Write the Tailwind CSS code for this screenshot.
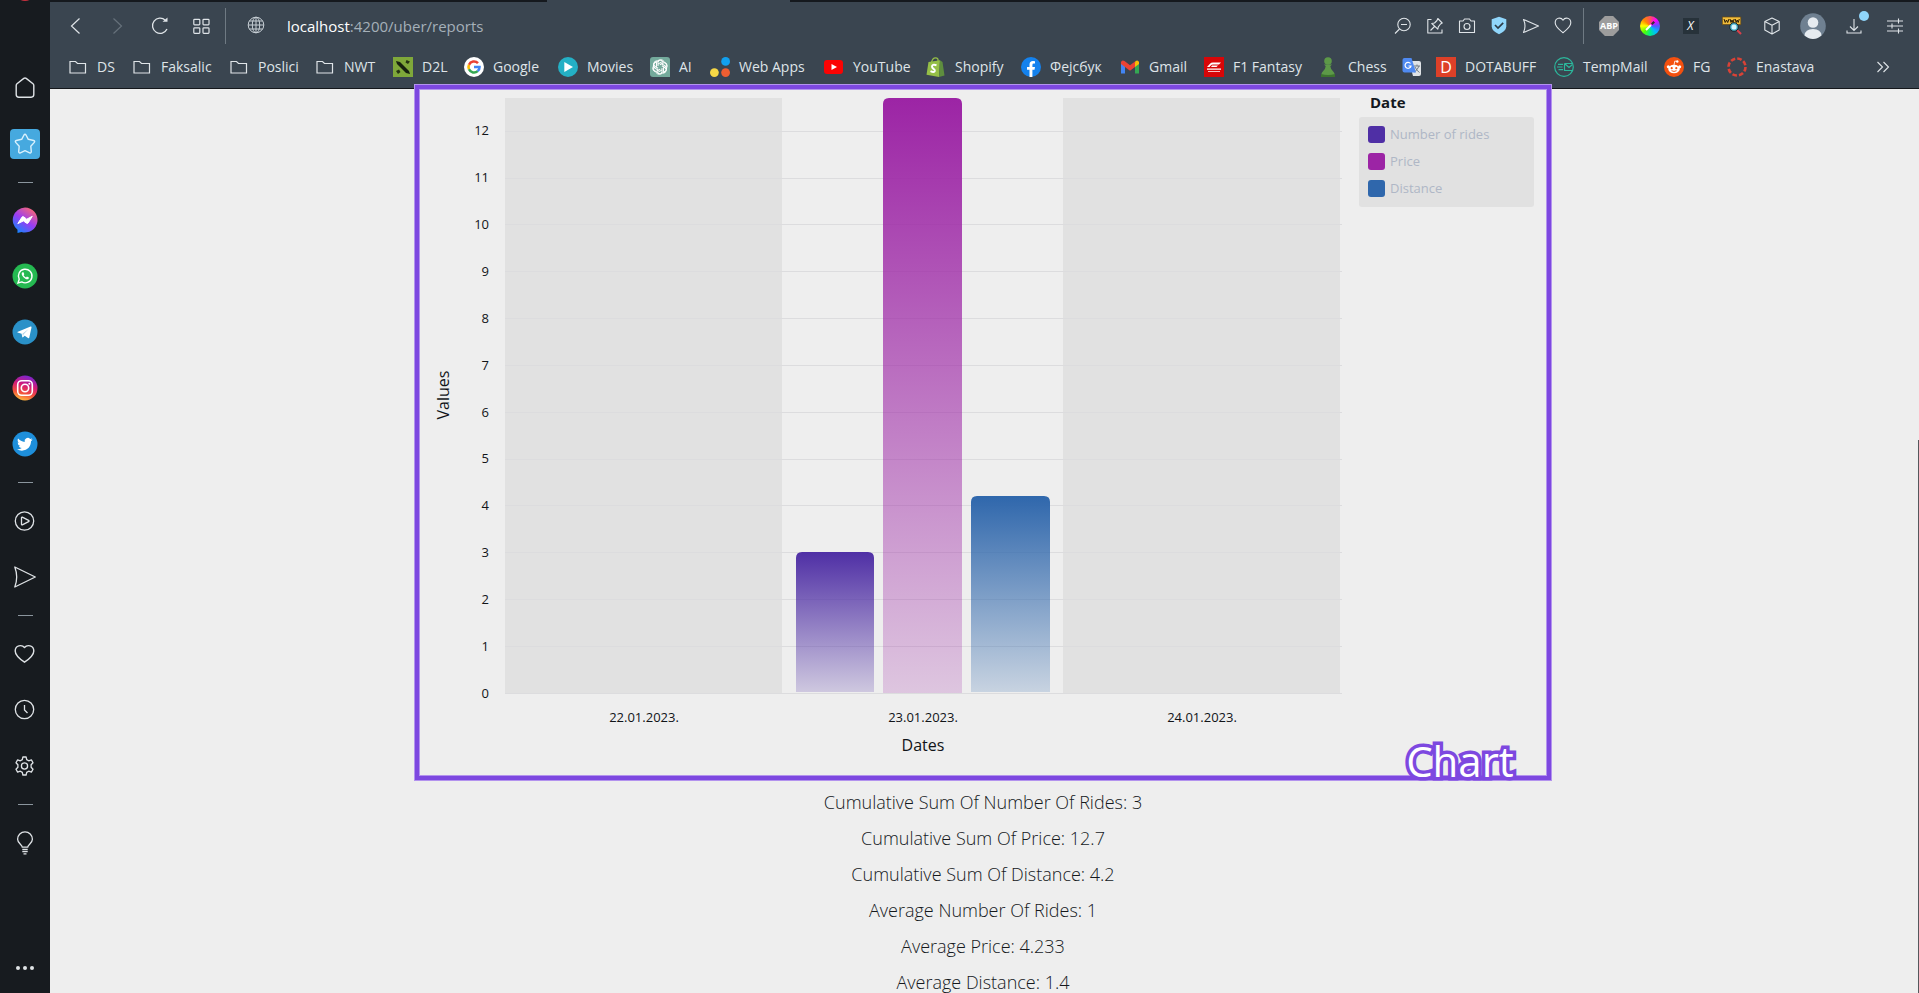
<!DOCTYPE html>
<html lang="en">
<head>
<meta charset="utf-8">
<title>Reports</title>
<script src="https://cdn.jsdelivr.net/npm/@tailwindcss/browser@4"></script>
</head>
<body class="flex h-screen overflow-hidden bg-[#eeeeee] font-['Open_Sans','Noto_Sans',sans-serif]">

<!-- Sidebar -->
<nav aria-label="Sidebar" class="relative flex w-[50px] shrink-0 flex-col bg-[#171b1f] pt-15 text-[#dfe3e6]">
  <span class="absolute -top-[19px] left-[15px] size-5 rounded-full bg-[#c8313f]"></span>
  <button aria-label="Home" class="flex h-14 items-center justify-center"><svg class="size-6" viewBox="0 0 24 24" fill="none" stroke="currentColor" stroke-width="1.4"><path d="M3.2 9.5Q3.2 8.5 4 7.8L10.8 2.4Q12 1.5 13.2 2.4L20 7.8Q20.8 8.5 20.8 9.5V18.6Q20.8 21.2 18.2 21.2H5.8Q3.2 21.2 3.2 18.600Z"/></svg></button>
  <button aria-label="Speed dial" class="flex h-14 items-center justify-center"><span class="flex size-[30px] items-center justify-center rounded-sm bg-[#46a9df]"><svg class="size-6" viewBox="0 0 24 24" fill="none" stroke="#d9f1fd" stroke-width="1.4" stroke-linejoin="round"><path d="M11 3Q12 1.600 13 3L15.300 7.300L20.700 8.500Q22.300 9 21.300 10.400L17.800 14.300L18.300 19.600Q18.300 21.400 16.600 20.800L12 18.700L7.400 20.800Q5.700 21.400 5.700 19.600L6.200 14.300L2.700 10.400Q1.700 9 3.300 8.500L8.700 7.300Z"/></svg></span></button>
  <div class="flex h-5 items-center justify-center"><span class="h-px w-[15px] bg-[#8b959d]"></span></div>
  <button aria-label="Messenger" class="flex h-14 items-center justify-center"><svg class="size-[26px]" viewBox="0 0 26 26"><defs><linearGradient id="ms" x1="0.15" y1="1" x2="0.8" y2="0"><stop offset="0" stop-color="#0a8cff"/><stop offset=".5" stop-color="#9a3cf3"/><stop offset="1" stop-color="#ff6a6e"/></linearGradient></defs><path d="M13 .5A12.500 12.500 0 1 1 9.500 25L5.500 26V22.800A12.500 12.500 0 0 1 13 .5Z" fill="url(#ms)"/><path d="M5.800 16.600L10 10.100Q10.800 9.200 11.800 9.900L14.700 12.200L20.300 9.300L16.200 15.900Q15.400 16.900 14.300 16.100L11.500 13.900Z" fill="#fff" stroke="#fff" stroke-linejoin="round"/></svg></button>
  <button aria-label="WhatsApp" class="flex h-14 items-center justify-center"><svg class="size-[26px]" viewBox="0 0 26 26"><circle cx="13" cy="13" r="12.500" fill="#25b951"/><path d="M6 20L7.200 16.200A6.800 6.800 0 1 1 9.800 18.900Z" fill="none" stroke="#fff" stroke-width="1.400"/><path d="M10.500 9.200C9 10 9.600 12.200 11.500 14.200S15.800 17 16.700 15.400L16.900 14.600L14.900 13.500L14 14.500Q12.400 13.800 11.600 12.200L12.300 11.200L11.500 9.200Z" fill="#fff"/></svg></button>
  <button aria-label="Telegram" class="flex h-14 items-center justify-center"><svg class="size-[26px]" viewBox="0 0 26 26"><circle cx="13" cy="13" r="12.500" fill="#2a91c8"/><path d="M5.300 12.900L18.600 7.600Q19.700 7.200 19.500 8.500L17.300 18.600Q17 19.700 16 19.100L12.700 16.700L11 18.300Q10.400 18.700 10.200 17.800L9.600 14.700L5.500 13.600Z" fill="#fff"/><path d="M10.400 14.700L16.600 10L11.500 15.500L11 17.500Z" fill="#b3d5e8"/></svg></button>
  <button aria-label="Instagram" class="flex h-14 items-center justify-center"><svg class="size-[26px]" viewBox="0 0 26 26"><defs><linearGradient id="ig" x1=".3" y1="1" x2=".6" y2="0"><stop offset="0" stop-color="#ffc33d"/><stop offset=".3" stop-color="#f2513b"/><stop offset=".62" stop-color="#d31b78"/><stop offset="1" stop-color="#7a25cf"/></linearGradient></defs><circle cx="13" cy="13" r="12.500" fill="url(#ig)"/><g fill="none" stroke="#fff" stroke-width="1.600"><rect x="5.700" y="5.700" width="14.600" height="14.600" rx="4"/><circle cx="13" cy="13" r="3.700"/></g><circle cx="17.300" cy="8.800" r="1" fill="#fff"/></svg></button>
  <button aria-label="Twitter" class="flex h-14 items-center justify-center"><svg class="size-[26px]" viewBox="0 0 26 26"><circle cx="13" cy="13" r="12.500" fill="#1e8fdb"/><path transform="translate(5 5.500) scale(.65)" d="M23.950 4.570a10 10 0 0 1-2.820.77 4.960 4.960 0 0 0 2.160-2.720c-.95.550-2 .950-3.120 1.180a4.920 4.920 0 0 0-8.390 4.480C7.690 8.100 4.070 6.130 1.640 3.160a4.820 4.820 0 0 0-.670 2.480c0 1.710.870 3.210 2.190 4.100a4.900 4.900 0 0 1-2.230-.620v.060a4.920 4.920 0 0 0 3.950 4.830 5 5 0 0 1-2.210.080 4.940 4.940 0 0 0 4.600 3.420A9.870 9.870 0 0 1 0 19.540a13.990 13.990 0 0 0 7.550 2.210c9.050 0 14-7.500 14-13.980 0-.210 0-.420-.020-.630a9.940 9.940 0 0 0 2.460-2.550z" fill="#fff"/></svg></button>
  <div class="flex h-[21px] items-center justify-center"><span class="h-px w-[15px] bg-[#8b959d]"></span></div>
  <button aria-label="Player" class="flex h-14 items-center justify-center"><svg class="size-6" viewBox="0 0 24 24" fill="none" stroke="currentColor" stroke-width="1.300" stroke-linejoin="round"><circle cx="11.500" cy="12" r="9.200"/><path d="M8.500 8.800Q8.500 8 9.300 8.200L15.600 11.300Q16.500 12 15.600 12.700L9.300 15.800Q8.500 16 8.500 15.200Z"/></svg></button>
  <button aria-label="Flow" class="flex h-14 items-center justify-center"><svg class="size-6" viewBox="0 0 24 24" fill="none" stroke="currentColor" stroke-width="1.300" stroke-linejoin="round"><path d="M1.800 2L22.300 12L1.800 22Q5.600 12 1.800 2Z"/></svg></button>
  <div class="flex h-[21px] items-center justify-center"><span class="h-px w-[15px] bg-[#8b959d]"></span></div>
  <button aria-label="Pinboards" class="flex h-14 items-center justify-center"><svg class="size-6" viewBox="0 0 24 24" fill="none" stroke="currentColor" stroke-width="1.400" stroke-linejoin="round"><path d="M11.500 5.500C9 2.500 2.200 3 2.200 9C2.200 13.500 7.500 17.500 11.500 20.200C15.500 17.500 20.800 13.500 20.800 9C20.800 3 14 2.500 11.500 5.500Z"/></svg></button>
  <button aria-label="History" class="flex h-14 items-center justify-center"><svg class="size-6" viewBox="0 0 24 24" fill="none" stroke="currentColor" stroke-width="1.300"><circle cx="11.500" cy="11.500" r="9.200"/><path d="M11.500 7V12L14.500 15"/></svg></button>
  <button aria-label="Settings" class="flex h-14 items-center justify-center"><svg class="size-6" viewBox="0 0 24 24" fill="none" stroke="currentColor" stroke-width="1.300" stroke-linejoin="round"><circle cx="11.500" cy="12" r="3.100"/><path d="M9.900 3H13.100L13.700 5.600L15.700 6.800L18.400 5.900L20 8.700L18.100 10.800V13.200L20 15.300L18.400 18.100L15.700 17.200L13.700 18.400L13.100 21H9.900L9.300 18.400L7.300 17.200L4.600 18.100L3 15.300L4.900 13.200V10.800L3 8.700L4.600 5.900L7.300 6.800L9.300 5.600Z"/></svg></button>
  <div class="flex h-[21px] items-center justify-center"><span class="h-px w-[15px] bg-[#8b959d]"></span></div>
  <button aria-label="Tips" class="flex h-14 items-center justify-center"><svg class="size-6" viewBox="0 0 24 24" fill="none" stroke="currentColor" stroke-width="1.300"><path d="M9.300 16.200C9.300 13.500 4.600 12.500 4.600 8.200A7.400 7.400 0 0 1 19.400 8.200C19.400 12.500 14.700 13.500 14.700 16.200ZM9.300 18.500H14.700M9.300 20.700H14.700M10.500 22.800H13.500"/></svg></button>
  <button aria-label="More" class="mt-auto flex h-[51px] items-center justify-center"><svg class="size-6" viewBox="0 0 24 24" fill="currentColor"><circle cx="5" cy="12" r="2"/><circle cx="12" cy="12" r="2"/><circle cx="19" cy="12" r="2"/></svg></button>
</nav>

<div class="flex min-w-0 flex-1 flex-col">
  <!-- Browser bars -->
  <header class="shrink-0 border-b border-[#15181c] bg-[#3a4550] text-[#dfe4e8]">
    <div class="h-[2px] bg-[#15191e] pl-[497px]"><div class="h-full w-[243px] bg-[#3a4550]"></div></div>
    <div class="flex h-12 items-center pr-1 pl-[5px]">
      <button aria-label="Back" class="flex h-10 w-[42px] items-center justify-center"><svg class="size-5" viewBox="0 0 20 20" fill="none" stroke="currentColor" stroke-width="1.200"><path d="M13.500 2.500L5.500 10L13.500 17.500"/></svg></button>
      <button aria-label="Forward" class="flex h-10 w-[42px] items-center justify-center text-[#66717b]"><svg class="size-5" viewBox="0 0 20 20" fill="none" stroke="currentColor" stroke-width="1.200"><path d="M5.500 2.500L13.500 10L5.500 17.500"/></svg></button>
      <button aria-label="Reload" class="flex h-10 w-[42px] items-center justify-center"><svg class="size-5" viewBox="0 0 20 20" fill="none" stroke="currentColor" stroke-width="1.300"><path d="M15.300 4.200A7.600 7.600 0 1 0 17 13"/><path d="M12.500 5.800H17.500V1.500Z" fill="currentColor" stroke="none"/></svg></button>
      <button aria-label="Workspaces" class="flex h-10 w-[42px] items-center justify-center"><svg class="size-5" viewBox="0 0 20 20" fill="none" stroke="currentColor" stroke-width="1.200"><rect x="1.800" y="3.300" width="6" height="5.500" rx=".8"/><rect x="11" y="3.300" width="6" height="5.500" rx=".8"/><rect x="1.800" y="11.800" width="6" height="5.500" rx=".8"/><rect x="11" y="11.800" width="6" height="5.500" rx=".8"/></svg></button>
      <span class="ml-[2px] h-9 w-px bg-[#6f7a83]"></span>
      <svg class="ml-5 size-5 shrink-0" viewBox="0 0 20 20" fill="none" stroke="#c6ced4" stroke-width="1"><circle cx="10" cy="9" r="7.800"/><ellipse cx="10" cy="9" rx="3.700" ry="7.800"/><path d="M10 1.200V16.800M2.200 9H17.800M3.500 5H16.500M3.500 13H16.500"/></svg>
      <a href="#" class="ml-[21px] flex-1 text-[15px] text-[#a5b0b9]"><span class="text-white">localhost</span>:4200/uber/reports</a>
      <button aria-label="Zoom" class="flex h-10 w-8 items-center justify-center"><svg class="size-5" viewBox="0 0 20 20" fill="none" stroke="currentColor" stroke-width="1.100"><circle cx="11" cy="8.500" r="6.200"/><path d="M8 8.500H14M6.500 13L2 17.500"/></svg></button>
      <button aria-label="Pin page" class="flex h-10 w-8 items-center justify-center"><svg class="size-5" viewBox="0 0 20 20" fill="none" stroke="currentColor" stroke-width="1.100" stroke-linejoin="round"><path d="M6.500 3.500H2.800V17H17V13.500M12.800 2.500L17.200 7L15.500 8L13.300 10.800L12.800 13.200L6.800 7.500L9.500 7L12 4.500ZM9.500 10.500L5.500 14.500"/></svg></button>
      <button aria-label="Snapshot" class="flex h-10 w-8 items-center justify-center"><svg class="size-5" viewBox="0 0 20 20" fill="none" stroke="currentColor" stroke-width="1.100"><path d="M2.500 5H6L7.500 3H12.500L14 5H17.500V16.500H2.500Z" stroke-linejoin="round"/><circle cx="10" cy="10.500" r="3"/></svg></button>
      <button aria-label="Ad blocker" class="flex h-10 w-8 items-center justify-center"><svg class="size-5" viewBox="0 0 20 20"><path d="M10 .8L17.300 3.200V10.500Q17 15.200 10 18.200Q3 15.200 2.700 10.500V3.200Z" fill="#90d6fb"/><path d="M6 9L9 12L14.200 6.800" fill="none" stroke="#2c3c48" stroke-width="1.700"/></svg></button>
      <button aria-label="Send to Flow" class="flex h-10 w-8 items-center justify-center"><svg class="size-5" viewBox="0 0 20 20" fill="none" stroke="currentColor" stroke-width="1.100" stroke-linejoin="round"><path d="M2.500 3.500L17.500 10L2.500 16.500Q5.500 10 2.500 3.500Z"/></svg></button>
      <button aria-label="Favourite" class="flex h-10 w-8 items-center justify-center"><svg class="size-5" viewBox="0 0 20 20" fill="none" stroke="currentColor" stroke-width="1.100" stroke-linejoin="round"><path d="M10 4.200C8 .8 2.200 1.500 2.200 6.800C2.200 11 6.800 14 10 16.800C13.200 14 17.800 11 17.800 6.800C17.800 1.500 12 .8 10 4.200Z"/></svg></button>
      <span class="mx-1 h-9 w-px bg-[#6f7a83]"></span>
      <button aria-label="Adblock Plus" class="flex h-10 w-[41px] items-center justify-center"><svg class="size-5" viewBox="0 0 20 20"><path d="M5.900 0H14.100L20 5.900V14.100L14.100 20H5.900L0 14.100V5.900Z" fill="#9d9d9d"/><text x="10" y="13.200" text-anchor="middle" font-family="Open Sans" font-weight="700" font-size="9" fill="#fff">ABP</text></svg></button>
      <button aria-label="Colour picker" class="flex h-10 w-[41px] items-center justify-center"><span class="flex size-5 items-center justify-center rounded-full bg-[conic-gradient(#f55,#f0f,#55f,#0bf,#0e8,#5f0,#ff0,#f80,#f55)]"><svg class="size-4" viewBox="0 0 16 16"><path d="M4 12L9 7" stroke="#fff" stroke-width="2"/><path d="M9 5.500L11.500 3L13 4.500L10.500 7Z" fill="#333"/></svg></span></button>
      <button aria-label="X extension" class="flex h-10 w-[41px] items-center justify-center"><span class="size-4 bg-[#27323a] text-center text-[12px] leading-4 text-white italic">X</span></button>
      <button aria-label="Domain lookup" class="flex h-10 w-[41px] items-center justify-center"><svg class="size-5" viewBox="0 0 20 20"><rect x=".3" y="1" width="18.500" height="7.500" fill="#f1bd3c" stroke="#6b4b10" stroke-width=".7"/><path d="M2 3L3.200 6.500L4.500 4L5.700 6.500L7 3M8 3L9 6.500L10 4L11 6.500L12.200 3M13.200 3L14.200 6.500L15.200 4L16.200 6.500L17.300 3" fill="none" stroke="#2a1d08" stroke-width="1"/><path d="M15 14L19 18" stroke="#d9404a" stroke-width="2.200"/><circle cx="12" cy="11" r="4.300" fill="#49b7cf" stroke="#19242c" stroke-width="1"/><circle cx="12" cy="11" r="2.500" fill="#d9f4fb"/></svg></button>
      <button aria-label="Extensions" class="flex h-10 w-10 items-center justify-center"><svg class="size-5" viewBox="0 0 20 20" fill="none" stroke="currentColor" stroke-width="1.100" stroke-linejoin="round"><path d="M10 2L17.200 5.500V14L10 18L2.800 14V5.500ZM2.800 5.500L10 9.300L17.200 5.500M10 9.300V18"/></svg></button>
      <button aria-label="Profile" class="flex h-10 w-[41px] items-center justify-center"><svg class="size-[26px]" viewBox="0 0 26 26"><circle cx="13" cy="13" r="12.800" fill="#6f8091"/><circle cx="13" cy="9.500" r="5.300" fill="#e6ebf0"/><path d="M4.500 22.500Q5 16 13 16T21.500 22.500Q17 26 13 26T4.500 22.500Z" fill="#e6ebf0"/></svg></button>
      <button aria-label="Downloads" class="relative flex h-10 w-[41px] items-center justify-center"><svg class="size-5" viewBox="0 0 20 20" fill="none" stroke="currentColor" stroke-width="1.100"><path d="M10 3V14M6 10.500L10 14.500L14 10.500M3 14.500V17H17V14.500"/></svg><span class="absolute top-[5px] right-[5px] size-[10px] rounded-full bg-[#90d6fb]"></span></button>
      <button aria-label="Easy setup" class="flex h-10 w-[41px] items-center justify-center"><svg class="size-5" viewBox="0 0 20 20" fill="none" stroke="currentColor" stroke-width="1.100"><path d="M2 5H18M2 10H18M2 15H18M13.500 2.500V7.500M7 7.500V12.500M13.500 12.500V17.500"/></svg></button>
    </div>

    <nav aria-label="Bookmarks" class="flex h-[38px] items-center pb-[5px] pl-[18px] text-[14px] whitespace-nowrap">
      <a href="#" class="flex w-[64px] shrink-0 items-center gap-[9px]"><svg class="size-5 shrink-0" viewBox="0 0 20 20" fill="none" stroke="currentColor" stroke-width="1.200"><path id="f" d="M2 16V4.500H7.500L9.500 6.500H17.500V16Z"/></svg>DS</a>
      <a href="#" class="flex w-[97px] shrink-0 items-center gap-[9px]"><svg class="size-5 shrink-0" viewBox="0 0 20 20" fill="none" stroke="currentColor" stroke-width="1.200"><use href="#f"/></svg>Faksalic</a>
      <a href="#" class="flex w-[86px] shrink-0 items-center gap-[9px]"><svg class="size-5 shrink-0" viewBox="0 0 20 20" fill="none" stroke="currentColor" stroke-width="1.200"><use href="#f"/></svg>Poslici</a>
      <a href="#" class="flex w-[78px] shrink-0 items-center gap-[9px]"><svg class="size-5 shrink-0" viewBox="0 0 20 20" fill="none" stroke="currentColor" stroke-width="1.200"><use href="#f"/></svg>NWT</a>
      <a href="#" class="flex w-[71px] shrink-0 items-center gap-[9px]"><svg class="size-5 shrink-0" viewBox="0 0 20 20"><rect width="20" height="20" fill="#7fa83a"/><path d="M3 4L7 5L16 14L17 17L13 16L4 7Z" fill="#17210f"/><path d="M13.500 3L17 4.500L15 7L12.500 5.500ZM3 14L6 12.500L7.500 15L5 17Z" fill="#263513"/></svg>D2L</a>
      <a href="#" class="flex w-[94px] shrink-0 items-center gap-[9px]"><svg class="size-5 shrink-0" viewBox="0 0 20 20" fill="none" stroke-width="2.600"><circle cx="10" cy="10" r="10" fill="#fff"/><path d="M14 6.200A5.500 5.500 0 0 0 5 7.700" stroke="#ea4335"/><path d="M5 7.700A5.500 5.500 0 0 0 5 12.300" stroke="#fbbc05"/><path d="M5 12.300A5.500 5.500 0 0 0 13.700 14.100" stroke="#34a853"/><path d="M13.700 14.100A5.500 5.500 0 0 0 15.500 10H10" stroke="#4285f4"/></svg>Google</a>
      <a href="#" class="flex w-[92px] shrink-0 items-center gap-[9px]"><svg class="size-5 shrink-0" viewBox="0 0 20 20"><circle cx="10" cy="10" r="10" fill="#24b0c5"/><path d="M6.300 5L15 10L6.300 15Z" fill="#fff"/></svg>Movies</a>
      <a href="#" class="flex w-[60px] shrink-0 items-center gap-[9px]"><svg class="size-5 shrink-0" viewBox="0 0 20 20" fill="none" stroke="#fff" stroke-width="1"><path d="M3 0H17Q20 0 20 3V20H3Q0 20 0 17V3Q0 0 3 0Z" fill="#74aa9c" stroke="none"/><g id="k"><path id="p" d="M8 9V5.500Q8.300 3 10.700 2.800Q12.500 2.700 13.800 4.200M8 7L11.500 5.100Q14 4 15.800 6Q17 8 16 9.800"/><use href="#p" transform="rotate(60 10 10)"/><use href="#p" transform="rotate(120 10 10)"/></g><use href="#k" transform="rotate(180 10 10)"/></svg>AI</a>
      <a href="#" class="flex w-[114px] shrink-0 items-center gap-[9px]"><svg class="size-5 shrink-0" viewBox="0 0 20 20"><circle cx="15.600" cy="4.400" r="4.400" fill="#12a0ee"/><circle cx="4.400" cy="15.600" r="4.400" fill="#f7d846"/><circle cx="15.600" cy="15.600" r="4.400" fill="#ee5e32"/></svg>Web Apps</a>
      <a href="#" class="flex w-[102px] shrink-0 items-center gap-[9px]"><svg class="size-5 shrink-0" viewBox="0 0 20 20"><rect y="3" width="19" height="14" rx="3" fill="#fb0303"/><path d="M7.500 7L13 10L7.500 13Z" fill="#fff"/></svg>YouTube</a>
      <a href="#" class="flex w-[95px] shrink-0 items-center gap-[9px]"><svg class="size-5 shrink-0" viewBox="0 0 20 20"><path d="M2.500 5L14 3.300L13 20L.5 17.800Z" fill="#95bf47"/><path d="M14 3.300L16.500 5L18.500 18.500L13 20Z" fill="#5e8e3e"/><path d="M5.500 5.500Q6.500 .8 9.500 .8T12 4.500" fill="none" stroke="#95bf47" stroke-width="1.300"/><path d="M10.500 8.200Q6 6.800 6 9.700C6 12 9.300 11.700 8.800 14Q8.200 15.900 4.500 14.200" fill="none" stroke="#fff" stroke-width="2"/></svg>Shopify</a>
      <a href="#" class="flex w-[99px] shrink-0 items-center gap-[9px]"><svg class="size-5 shrink-0" viewBox="0 0 20 20"><circle cx="10" cy="10" r="10" fill="#1482ee"/><path d="M8.500 20V12.700H6V9.900H8.500V7.700Q8.500 4 12 4L14 4.200V6.600H12.700Q11.400 6.600 11.400 8V9.900H14L13.500 12.700H11.400V20Z" fill="#fff"/></svg>Фејсбук</a>
      <a href="#" class="flex w-[84px] shrink-0 items-center gap-[9px]"><svg class="size-5 shrink-0" viewBox="0 0 20 20"><path d="M1 5V16.500H5V9Z" fill="#4285f4"/><path d="M15 9V16.500H19V5Z" fill="#34a853"/><path d="M15 5.500V10L19 7V5Q18 2.500 15.500 4Z" fill="#fbbc04"/><path d="M1 5Q2 2.500 4.500 4L10 8.300L15 4.500V10L10 13.800L5 10L1 7Z" fill="#ea4335"/></svg>Gmail</a>
      <a href="#" class="flex w-[115px] shrink-0 items-center gap-[9px]"><svg class="size-5 shrink-0" viewBox="0 0 20 20"><rect width="20" height="20" fill="#d80608"/><path d="M3 10L6 6.800Q7 5.500 9 5.500H17L15 7.500H9Q7.500 7.500 6.500 8.700L5.500 10ZM7 10L8 8.500H14L12.500 10ZM3 11.500H17V12.800H3ZM4 14H16V14.800H4Z" fill="#fff"/></svg>F1 Fantasy</a>
      <a href="#" class="flex w-[83px] shrink-0 items-center gap-[9px]"><svg class="size-5 shrink-0" viewBox="0 0 20 20" fill="#5d9948"><circle cx="9" cy="4" r="3.800"/><path d="M5 7.500H13L11.300 9.200Q11.500 12.500 15 15.500Q16 17 16 20H2Q2 17 3 15.500Q6.500 12.500 6.700 9.200Z"/><path d="M2 17Q9 19 16 17V20H2Z" fill="#3d742f"/></svg>Chess</a>
      <a href="#" aria-label="Translate" class="flex w-[34px] shrink-0 items-center"><svg class="size-5 shrink-0" viewBox="0 0 20 20"><path d="M7 4H17Q19 4 19 6V17Q19 19 17 19H11Z" fill="#dfe3e6"/><path d="M12 9H18M15 7.500V9M17 9Q15.500 13 12.500 15M13 10Q15 14 17.500 15.500" stroke="#707b83" fill="none"/><path d="M2.500 1H9.500L14 15.500H2.500Q.5 15.500 .5 13.500V3Q.5 1 2.500 1Z" fill="#4f8af2"/><path d="M8.500 6.500A3 3 0 1 0 9 9H6.500" fill="none" stroke="#fff" stroke-width="1.200"/></svg></a>
      <a href="#" class="flex w-[118px] shrink-0 items-center gap-[9px]"><span class="size-5 shrink-0 bg-[#dd4028] text-center text-[16px] leading-5 text-white">D</span>DOTABUFF</a>
      <a href="#" class="flex w-[110px] shrink-0 items-center gap-[9px]"><svg class="size-5 shrink-0" viewBox="0 0 20 20" fill="none" stroke="#2cb79c" stroke-width="1.200"><circle cx="10" cy="10" r="9.300"/><path d="M4 7.300H9M3 10H8.500M4.500 12.700H9M10.500 6.500H18.500M10.500 6.500V13.500H18.500M10.500 6.500L15 10.500L18.500 7.500"/></svg>TempMail</a>
      <a href="#" class="flex w-[63px] shrink-0 items-center gap-[9px]"><svg class="size-5 shrink-0" viewBox="0 0 20 20"><circle cx="10" cy="10" r="10" fill="#f4500f"/><g fill="#fff"><ellipse cx="10" cy="12" rx="5.800" ry="4.200"/><circle cx="4.300" cy="9.800" r="1.500"/><circle cx="15.700" cy="9.800" r="1.500"/><circle cx="13.300" cy="4.500" r="1.200"/></g><path d="M10 8L10.800 4L13 4.500" fill="none" stroke="#fff" stroke-width=".8"/><circle cx="7.700" cy="11.200" r="1.100" fill="#f4500f"/><circle cx="12.300" cy="11.200" r="1.100" fill="#f4500f"/><path d="M7.500 13.700Q10 15.200 12.500 13.700" fill="none" stroke="#f4500f" stroke-width=".9"/></svg>FG</a>
      <a href="#" class="flex shrink-0 items-center gap-[9px]"><svg class="size-5 shrink-0" viewBox="0 0 20 20" fill="none" stroke="#da4236" stroke-width="2.600"><circle cx="10" cy="10" r="8.500" stroke-dasharray="4.600 2.075"/></svg>Enastava</a>
      <button aria-label="More bookmarks" class="mr-[26px] ml-auto"><svg class="size-5" viewBox="0 0 20 20" fill="none" stroke="currentColor" stroke-width="1.100"><path d="M4.500 5L9.500 10L4.500 15M10.500 5L15.500 10L10.500 15"/></svg></button>
    </nav>
  </header>

  <!-- Report page -->
  <main class="relative flex min-h-0 flex-1 flex-col items-center pr-[3px]">
    <span class="absolute right-0 bottom-0 top-[351px] w-px bg-[#55585c]"></span>
    <section aria-label="Chart" class="relative z-10 -mt-1 flex w-full max-w-[1136px] shrink-0 items-start border-4 border-[#7d48e0] pr-[13px] shadow-[0_0_0_1px_#b393ee,inset_0_0_0_1px_#b393ee]">
      <svg class="min-w-0 flex-1" viewBox="0 0 932 687" role="img" aria-label="Values by date" font-family="Open Sans, Noto Sans, sans-serif" fill="#111418">
        <defs>
          <linearGradient id="g1" x1="0" y1="0" x2="0" y2="1"><stop offset="0" stop-color="#4f2fa5"/><stop offset="1" stop-color="#4f2fa5" stop-opacity=".2"/></linearGradient>
          <linearGradient id="g2" x1="0" y1="0" x2="0" y2="1"><stop offset="0" stop-color="#9c24a5"/><stop offset="1" stop-color="#9c24a5" stop-opacity=".2"/></linearGradient>
          <linearGradient id="g3" x1="0" y1="0" x2="0" y2="1"><stop offset="0" stop-color="#2f67ac"/><stop offset="1" stop-color="#2f67ac" stop-opacity=".2"/></linearGradient>
        </defs>
        <g fill="#e1e1e1"><rect x="86" y="9" width="277" height="595"/><rect x="644" y="9" width="277" height="595"/></g>
        <path stroke="#dcdcde" d="M86 42.500H923M86 89.500H923M86 135.500H923M86 182.500H923M86 229.500H923M86 276.500H923M86 323.500H923M86 370.500H923M86 416.500H923M86 463.500H923M86 510.500H923M86 557.500H923M86 604.500H923"/>
        <path fill="url(#g1)" d="M377 603V469Q377 463 383 463H449Q455 463 455 469V603Z"/>
        <path fill="url(#g2)" d="M464 604V15Q464 9 470 9H537Q543 9 543 15V604Z"/>
        <path fill="url(#g3)" d="M552 603V413Q552 407 558 407H625Q631 407 631 413V603Z"/>
        <g font-size="13" text-anchor="end">
          <text x="70" y="46">12</text><text x="70" y="93">11</text><text x="70" y="140">10</text><text x="70" y="187">9</text><text x="70" y="234">8</text><text x="70" y="281">7</text><text x="70" y="328">6</text><text x="70" y="374">5</text><text x="70" y="421">4</text><text x="70" y="468">3</text><text x="70" y="515">2</text><text x="70" y="562">1</text><text x="70" y="609">0</text>
        </g>
        <g font-size="13" text-anchor="middle"><text x="225" y="633">22.01.2023.</text><text x="504" y="633">23.01.2023.</text><text x="783" y="633">24.01.2023.</text></g>
        <g font-size="16" text-anchor="middle"><text x="504" y="662">Dates</text><text transform="translate(30 306) rotate(-90)">Values</text></g>
      </svg>
      <div class="ml-2 w-[175px] shrink-0">
        <h2 class="pb-[2px] pl-[11px] text-[15px] leading-[26px] font-bold text-[#14181d]">Date</h2>
        <ul class="rounded-[3px] bg-[#e1e1e1] pt-1 pb-[5px] pl-[9px] text-[13px] leading-[27px] text-[#afb7c6]">
          <li class="flex items-center gap-[5px]"><span class="size-[17px] rounded-[3px] bg-[#4f2fa5]"></span>Number of rides</li>
          <li class="flex items-center gap-[5px]"><span class="size-[17px] rounded-[3px] bg-[#9c24a5]"></span>Price</li>
          <li class="flex items-center gap-[5px]"><span class="size-[17px] rounded-[3px] bg-[#2f67ac]"></span>Distance</li>
        </ul>
      </div>
      <svg class="absolute right-[23px] -bottom-5 h-16 w-32" viewBox="0 0 128 64"><text x="64" y="45" text-anchor="middle" font-family="Open Sans, Noto Sans, sans-serif" font-size="42" font-weight="500" fill="#fff" stroke="#7d48e0" stroke-width="7" paint-order="stroke">Chart</text></svg>
    </section>
    <div class="mt-1 text-center text-[18px] leading-9 font-light text-[#15191d]">
      <p>Cumulative Sum Of Number Of Rides: 3</p>
      <p>Cumulative Sum Of Price: 12.7</p>
      <p>Cumulative Sum Of Distance: 4.2</p>
      <p>Average Number Of Rides: 1</p>
      <p>Average Price: 4.233</p>
      <p>Average Distance: 1.4</p>
    </div>
  </main>
</div>
</body>
</html>
